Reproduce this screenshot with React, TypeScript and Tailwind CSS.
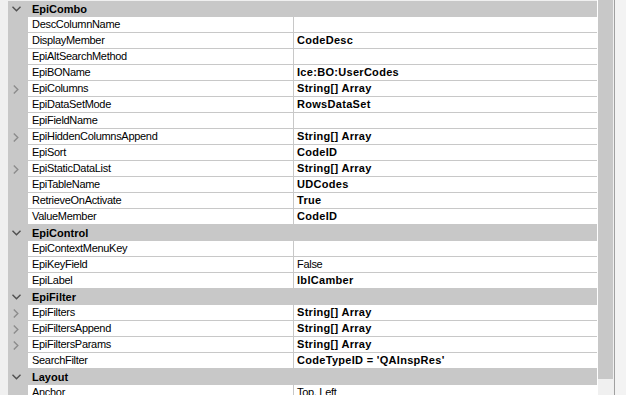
type Prop = { name: string; value?: string; bold?: boolean; expand?: boolean };
type Category = { title: string; props: Prop[] };

const categories: Category[] = [
  {
    title: "EpiCombo",
    props: [
      { name: "DescColumnName" },
      { name: "DisplayMember", value: "CodeDesc", bold: true },
      { name: "EpiAltSearchMethod" },
      { name: "EpiBOName", value: "Ice:BO:UserCodes", bold: true },
      { name: "EpiColumns", value: "String[] Array", bold: true, expand: true },
      { name: "EpiDataSetMode", value: "RowsDataSet", bold: true },
      { name: "EpiFieldName" },
      { name: "EpiHiddenColumnsAppend", value: "String[] Array", bold: true, expand: true },
      { name: "EpiSort", value: "CodeID", bold: true },
      { name: "EpiStaticDataList", value: "String[] Array", bold: true, expand: true },
      { name: "EpiTableName", value: "UDCodes", bold: true },
      { name: "RetrieveOnActivate", value: "True", bold: true },
      { name: "ValueMember", value: "CodeID", bold: true },
    ],
  },
  {
    title: "EpiControl",
    props: [
      { name: "EpiContextMenuKey" },
      { name: "EpiKeyField", value: "False" },
      { name: "EpiLabel", value: "lblCamber", bold: true },
    ],
  },
  {
    title: "EpiFilter",
    props: [
      { name: "EpiFilters", value: "String[] Array", bold: true, expand: true },
      { name: "EpiFiltersAppend", value: "String[] Array", bold: true, expand: true },
      { name: "EpiFiltersParams", value: "String[] Array", bold: true, expand: true },
      { name: "SearchFilter", value: "CodeTypeID = 'QAInspRes'", bold: true },
    ],
  },
  {
    title: "Layout",
    props: [{ name: "Anchor", value: "Top, Left" }],
  },
];

function ChevronDown() {
  return (
    <svg width="9" height="6" viewBox="0 0 9 6" fill="none">
      <polyline points="0.5,0.8 4.5,4.8 8.5,0.8" stroke="#505050" strokeWidth="1.4" />
    </svg>
  );
}

function ChevronRight() {
  return (
    <svg width="6" height="9" viewBox="0 0 6 9" fill="none">
      <polyline points="0.8,0.5 4.8,4.5 0.8,8.5" stroke="#8c8c8c" strokeWidth="1.4" />
    </svg>
  );
}

function PropRow({ p }: { p: Prop }) {
  return (
    <div className="flex h-[16px] shrink-0">
      <div className="w-[20px] shrink-0 bg-[#c8c8c8] flex items-center pl-[5px]">
        {p.expand && <ChevronRight />}
      </div>
      <div className="w-[265px] shrink-0 bg-white border-b border-[#c8c8c8] pl-[4px] leading-[15px] tracking-[-0.3px] whitespace-nowrap overflow-hidden">
        {p.name}
      </div>
      <div
        className={
          "flex-1 bg-white border-b border-l border-[#c8c8c8] pl-[3px] leading-[15px] whitespace-nowrap overflow-hidden " +
          (p.bold ? "font-bold tracking-[0.3px]" : "tracking-[-0.3px]")
        }
      >
        {p.value}
      </div>
    </div>
  );
}

export default function App() {
  return (
    <div
      className="w-[626px] h-[395px] overflow-hidden flex bg-[#f0f0f0] text-[11px] text-black"
      style={{ fontFamily: '"Liberation Sans", Arial, sans-serif' }}
    >
      <div className="w-[8px] shrink-0" />
      <div className="w-[589px] shrink-0 flex flex-col pt-[1px]">
        {categories.map((c) => (
          <div key={c.title} className="flex flex-col">
            <div className="flex h-[16px] shrink-0 bg-[#c8c8c8]">
              <div className="w-[20px] shrink-0 flex items-center pl-[4px]">
                <ChevronDown />
              </div>
              <div className="pl-[4px] leading-[16px] font-bold">{c.title}</div>
            </div>
            {c.props.map((p) => (
              <PropRow key={p.name} p={p} />
            ))}
          </div>
        ))}
      </div>
      <div className="w-[1px] shrink-0 bg-white" />
      <div className="w-[15px] shrink-0 flex flex-col">
        <div className="h-[379px] bg-[#c8c8c8]" />
      </div>
      <div className="w-[1px] shrink-0" />
      <div className="w-[1px] shrink-0 bg-[#a0a0a0]" />
      <div className="flex-1 bg-[#f3f3f3]" />
    </div>
  );
}
